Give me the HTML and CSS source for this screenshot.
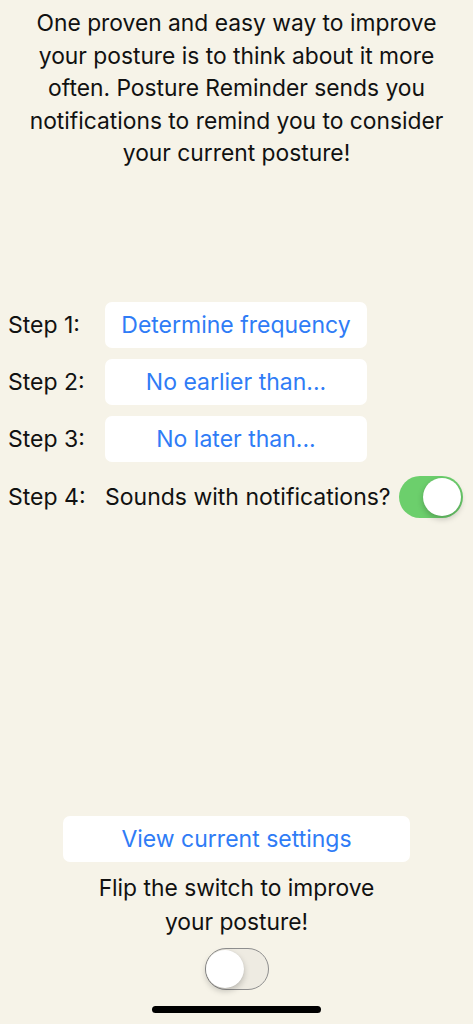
FILE: index.html
```html
<!DOCTYPE html>
<html lang="en">
<head>
    <meta charset="UTF-8">
    <title>Posture Reminder</title>
    <link rel="stylesheet" href="styles.css">
</head>
<body>
<div class="screen">

    <p class="intro">One proven and easy way to improve your posture is to think about it more often. Posture Reminder sends you notifications to remind you to consider your current posture!</p>

    <!-- Setup steps -->
    <div class="steps">
        <div class="step">
            <span class="step-label">Step 1:</span>
            <button class="btn step-btn">Determine frequency</button>
        </div>
        <div class="step">
            <span class="step-label">Step 2:</span>
            <button class="btn step-btn">No earlier than...</button>
        </div>
        <div class="step">
            <span class="step-label">Step 3:</span>
            <button class="btn step-btn">No later than...</button>
        </div>
        <div class="step step-sound">
            <span class="step-label">Step 4:</span>
            <span class="sound-text">Sounds with notifications?</span>
            <span class="switch on"><span class="knob"></span></span>
        </div>
    </div>

    <div class="bottom">
        <button class="btn settings-btn">View current settings</button>
        <p class="flip">Flip the switch to improve<br>your posture!</p>
        <span class="switch off"><span class="knob"></span></span>
    </div>

    <div class="home-bar"></div>
</div>
</body>
</html>
```

FILE: styles.css
```css
* {
    box-sizing: border-box;
}
body {
    margin: 0;
    background: #f6f3e8;
    font-family: 'Inter', 'Roboto', sans-serif;
    color: #111;
}
.screen {
    width: 473px;
    height: 1024px;
    display: flex;
    flex-direction: column;
    align-items: center;
}
.intro {
    margin: 0;
    padding: 7px 20px 0;
    font-size: 22.8px;
    line-height: 32.5px;
    text-align: center;
}
.steps {
    align-self: stretch;
    margin-top: 132px;
    padding-left: 8px;
    display: flex;
    flex-direction: column;
    gap: 11px;
}
.step {
    display: flex;
    align-items: center;
    height: 46px;
}
.step-label {
    width: 97px;
    font-size: 23px;
}
.btn {
    background: #fff;
    border: none;
    border-radius: 7px;
    height: 46px;
    font-family: inherit;
    font-size: 23px;
    color: #2f7cf6;
    padding: 0;
}
.step-btn {
    width: 262px;
}
.step-sound {
    margin-top: 1px;
}
.sound-text {
    font-size: 23px;
    margin-right: 8px;
    white-space: nowrap;
}
.switch {
    display: block;
    position: relative;
    flex-shrink: 0;
    width: 64px;
    height: 42px;
    border-radius: 21px;
}
.switch.on {
    background: #6ccf6c;
}
.switch.off {
    background: #eeebe2;
    border: 1.5px solid #8e8e8e;
}
.knob {
    position: absolute;
    top: 2px;
    width: 38px;
    height: 38px;
    border-radius: 50%;
    background: #fff;
    box-shadow: 0 3px 6px rgba(0,0,0,0.22), 0 0 1px rgba(0,0,0,0.1);
}
.switch.on .knob {
    right: 2px;
}
.switch.off .knob {
    top: 0.5px;
    left: 0.5px;
}
.bottom {
    margin-top: auto;
    display: flex;
    flex-direction: column;
    align-items: center;
}
.settings-btn {
    width: 347px;
}
.flip {
    margin: 9px 0 0;
    font-size: 22.8px;
    line-height: 34px;
    text-align: center;
}
.bottom .switch {
    margin-top: 9px;
}
.home-bar {
    width: 169px;
    height: 7px;
    border-radius: 4px;
    background: #000;
    margin: 16px 0 11px;
}
```
